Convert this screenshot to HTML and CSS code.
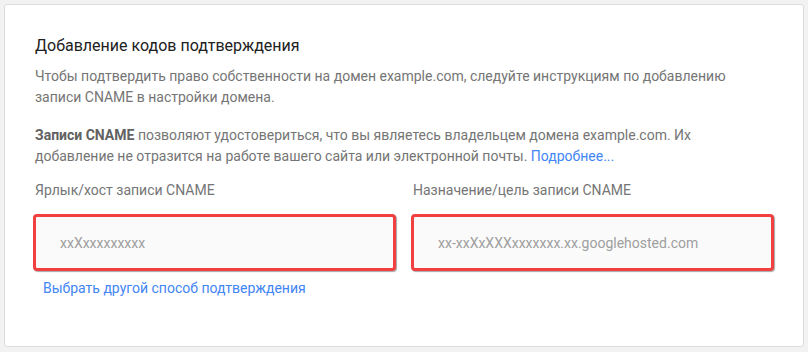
FILE: index.html
```html
<!DOCTYPE html>
<html lang="ru">
<head>
    <meta charset="UTF-8">
    <meta name="viewport" content="width=device-width, initial-scale=1.0">
    <title>Добавление кодов подтверждения</title>
    <link rel="stylesheet" href="styles.css">
</head>
<body>
    <div class="card">
        <h2>Добавление кодов подтверждения</h2>
        <p class="text">Чтобы подтвердить право собственности на домен example.com, следуйте инструкциям по добавлению записи CNAME в настройки домена.</p>
        <p class="text text-second"><b>Записи CNAME</b> позволяют удостовериться, что вы являетесь владельцем домена example.com. Их добавление не отразится на работе вашего сайта или электронной почты. <a href="#" class="link">Подробнее...</a></p>
        <div class="fields">
            <div class="field">
                <div class="field-label">Ярлык/хост записи CNAME</div>
                <div class="field-box">xxXxxxxxxxxx</div>
                <a href="#" class="link other-way">Выбрать другой способ подтверждения</a>
            </div>
            <div class="field">
                <div class="field-label">Назначение/цель записи CNAME</div>
                <div class="field-box">xx-xxXxXXXxxxxxxx.xx.googlehosted.com</div>
            </div>
        </div>
    </div>
</body>
</html>
```

FILE: styles.css
```css
* {
    margin: 0;
    padding: 0;
    box-sizing: border-box;
}
body {
    background: #f2f2f2;
    padding: 4px 4px 0;
    font-family: Roboto, "Noto Sans", sans-serif;
}
.card {
    background: white;
    border: 1px solid #dcdcdc;
    border-radius: 3px;
    height: 343px;
    padding: 29px 30px 0;
}
h2 {
    font-size: 16px;
    font-weight: normal;
    line-height: 24px;
    color: #212121;
}
.text {
    margin-top: 8px;
    font-size: 14px;
    line-height: 21px;
    color: #757575;
}
.text b {
    color: #616161;
    font-weight: bold;
}
.text-second {
    margin-top: 17px;
    line-height: 20.5px;
}
.link {
    color: #4285f4;
    text-decoration: none;
}
.fields {
    display: grid;
    grid-template-columns: 363px 363px;
    gap: 15px;
    margin-top: 14px;
}
.field-label {
    font-size: 14px;
    line-height: 21px;
    color: #757575;
}
.field-box {
    margin: 13px 0 0 -2px;
    width: 363px;
    height: 57px;
    border: 3px solid #f24040;
    border-radius: 4px;
    background: #fafafa;
    box-shadow: 1px 1px 1px rgba(0,0,0,0.35);
    padding-left: 24px;
    display: flex;
    align-items: center;
    font-size: 14px;
    color: #9e9e9e;
}
.other-way {
    display: block;
    margin: 7px 0 0 8px;
    font-size: 14px;
    line-height: 21px;
}
```
